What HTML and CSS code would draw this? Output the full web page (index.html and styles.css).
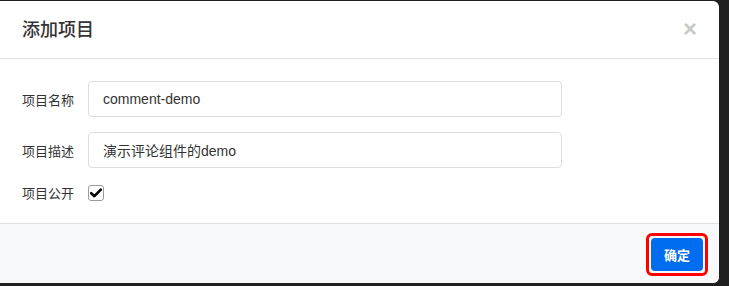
FILE: index.html
```html
<!DOCTYPE html>
<html lang="zh-CN">
<head>
<meta charset="utf-8">
<title>添加项目</title>
<link rel="stylesheet" href="styles.css">
</head>
<body>
<div class="modal">
  <div class="modal-header">
    <h4 class="modal-title">添加项目</h4>
    <span class="close">×</span>
  </div>
  <div class="modal-body">
    <div class="form-row">
      <label class="form-label">项目名称</label>
      <div class="form-input">comment-demo</div>
    </div>
    <div class="form-row">
      <label class="form-label">项目描述</label>
      <div class="form-input">演示评论组件的demo</div>
    </div>
    <div class="form-row check-row">
      <label class="form-label">项目公开</label>
      <span class="checkbox">
        <svg width="12" height="10" viewBox="0 0 12 10"><path d="M1.2 5.2 L4.4 8.2 L10.8 1.6" fill="none" stroke="#000" stroke-width="2.6" stroke-linecap="round" stroke-linejoin="round"/></svg>
      </span>
    </div>
  </div>
  <div class="modal-footer">
    <span class="highlight"><button class="btn-primary">确定</button></span>
  </div>
</div>
</body>
</html>
```
FILE: styles.css
```css
html, body {
  margin: 0;
  padding: 0;
  background: #202020;
  width: 729px;
  height: 286px;
  overflow: hidden;
}
body {
  font-family: "Liberation Sans", "Noto Sans CJK SC", sans-serif;
  color: #333;
}
.modal {
  margin-top: 1px;
  width: 719px;
  height: 282px;
  background: #fff;
  border-radius: 0 6px 6px 0;
  display: flex;
  flex-direction: column;
  overflow: hidden;
}
.modal-header {
  height: 58px;
  border-bottom: 1px solid #e0e0e0;
  display: flex;
  align-items: center;
  justify-content: space-between;
  padding: 0 22px;
  box-sizing: border-box;
  flex: none;
}
.modal-title {
  margin: 0;
  font-size: 18px;
  font-weight: 500;
  color: #333;
  line-height: 26px;
}
.close {
  font-size: 24px;
  font-weight: 700;
  color: #c8c8c8;
  line-height: 1;
  margin-right: 0;
  margin-top: -1px;
}
.modal-body {
  padding: 22px 0 0 22px;
  flex: 1;
}
.form-row {
  display: flex;
  align-items: center;
  margin-bottom: 15px;
}
.form-label {
  width: 66px;
  font-size: 13px;
  color: #333;
  flex: none;
}
.form-input {
  width: 474px;
  height: 36px;
  box-sizing: border-box;
  border: 1px solid #ddd;
  border-radius: 4px;
  padding-left: 14px;
  display: flex;
  align-items: center;
  font-size: 14px;
  color: #333;
}
.check-row {
  margin-top: 0;
}
.checkbox {
  width: 16px;
  height: 16px;
  box-sizing: border-box;
  border: 1px solid #9a9a9a;
  border-radius: 3px;
  background: #fff;
  display: flex;
  align-items: center;
  justify-content: center;
  margin-left: 0;
}
.modal-footer {
  height: 60px;
  flex: none;
  border-top: 1px solid #e0e0e0;
  background: #f8f9fa;
  box-sizing: border-box;
  display: flex;
  justify-content: flex-end;
  align-items: flex-start;
  padding: 9px 11px 0 0;
}
.highlight {
  display: inline-flex;
  border: 3px solid #f00;
  border-radius: 6px;
  padding: 2px;
}
.btn-primary {
  width: 52px;
  height: 33px;
  border: none;
  border-radius: 4px;
  background: #006cf0;
  color: #fff;
  font-family: "Liberation Sans", "Noto Sans CJK SC", sans-serif;
  font-size: 13px;
  font-weight: 700;
  padding: 0;
}
```
